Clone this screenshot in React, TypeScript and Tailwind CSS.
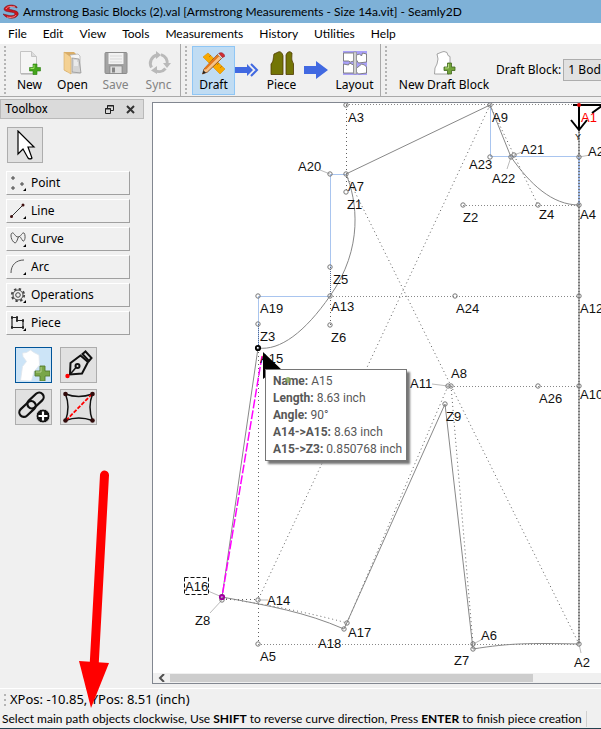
import React, { useState } from 'react';

const menus = ['File', 'Edit', 'View', 'Tools', 'Measurements', 'History', 'Utilities', 'Help'];

type Point = { name: string; x: number; y: number; lx: number; ly: number };

// Pattern points: x / y is the node, lx / ly is the label baseline
const points: Point[] = [
    { name: 'A3', x: 346, y: 105, lx: 348, ly: 122 },
    { name: 'A20', x: 330, y: 174, lx: 298, ly: 171 },
    { name: 'A7', x: 346, y: 174, lx: 348, ly: 191 },
    { name: 'Z1', x: 346, y: 192, lx: 347, ly: 209 },
    { name: 'A9', x: 490, y: 105, lx: 492, ly: 122 },
    { name: 'A21', x: 514, y: 155, lx: 521, ly: 154 },
    { name: 'A23', x: 490, y: 157, lx: 469, ly: 169 },
    { name: 'A22', x: 511, y: 157, lx: 492, ly: 183 },
    { name: 'A25', x: 579, y: 157, lx: 588, ly: 156 },
    { name: 'Z2', x: 463, y: 205, lx: 463, ly: 222 },
    { name: 'Z4', x: 538, y: 205, lx: 539, ly: 219 },
    { name: 'A4', x: 579, y: 205, lx: 580, ly: 219 },
    { name: 'Z5', x: 330, y: 267, lx: 333, ly: 284 },
    { name: 'A19', x: 258, y: 296, lx: 260, ly: 313 },
    { name: 'A13', x: 330, y: 296, lx: 331, ly: 311 },
    { name: 'A24', x: 455, y: 296, lx: 456, ly: 313 },
    { name: 'A12', x: 579, y: 296, lx: 580, ly: 313 },
    { name: 'Z3', x: 258, y: 324, lx: 260, ly: 341 },
    { name: 'Z6', x: 330, y: 325, lx: 331, ly: 342 },
    { name: 'A15', x: 258, y: 348, lx: 260, ly: 363 },
    { name: 'A8', x: 451, y: 386, lx: 451, ly: 378 },
    { name: 'A11', x: 448, y: 386, lx: 410, ly: 388 },
    { name: 'A26', x: 538, y: 386, lx: 539, ly: 403 },
    { name: 'A10', x: 579, y: 386, lx: 580, ly: 399 },
    { name: 'Z9', x: 445, y: 404, lx: 446, ly: 421 },
    { name: 'A16', x: 222, y: 597, lx: 185, ly: 591 },
    { name: 'Z8', x: 222, y: 600, lx: 195, ly: 625 },
    { name: 'A14', x: 258, y: 600, lx: 267, ly: 605 },
    { name: 'A17', x: 347, y: 623, lx: 348, ly: 637 },
    { name: 'A18', x: 344, y: 629, lx: 318, ly: 648 },
    { name: 'A5', x: 258, y: 644, lx: 260, ly: 661 },
    { name: 'A6', x: 473, y: 644, lx: 481, ly: 640 },
    { name: 'Z7', x: 473, y: 649, lx: 454, ly: 665 },
    { name: 'A2', x: 579, y: 644, lx: 574, ly: 667 },
];

const tooltipRows = [
    ['Name:', 'A15'],
    ['Length:', '8.63 inch'],
    ['Angle:', '90°'],
    ['A14->A15:', '8.63 inch'],
    ['A15->Z3:', '0.850768 inch'],
];

function Handle({ short = false }: { short?: boolean }) {
    return (
        <span className={`w-1 shrink-0 flex flex-col justify-between ${short ? 'h-3' : 'h-12'}`}>
            {Array.from({ length: short ? 3 : 12 }).map((_, i) => (
                <span key={i} className="size-0.5 bg-[#b4b4b4]" />
            ))}
        </span>
    );
}

function NewIcon() {
    return (
        <svg width="24" height="24" viewBox="0 0 24 24">
            <path d="M2.500.500h11l5 5v17h-16z" fill="#f5f5f5" stroke="#c4c4c4" />
            <path d="M13.500.500v5h5" fill="#dcdcdc" stroke="#c4c4c4" />
            <path d="M3 23h15" stroke="#aaa" />
            <path d="M15 13h4v3.500h3.500v3.500H19v3.500h-4V20h-3.500v-3.500H15z" fill="#45a51c" stroke="#2c7f13" strokeWidth=".6" />
            <path d="M16 14v3.500h-3.500" fill="none" stroke="#9be05e" />
        </svg>
    );
}

function OpenIcon() {
    return (
        <svg width="24" height="24" viewBox="0 0 24 24">
            <path d="M3 1h10l2 2v18H6L3 19z" fill="#d9ad68" />
            <path d="M9 4l8-1 2 2v17H9z" fill="#f6f6f6" stroke="#aaa" strokeWidth=".7" />
            <path d="M11 7l7 1 2 14-9-1z" fill="#d5d5d5" stroke="#8c8c8c" strokeWidth=".7" />
            <path d="M13 10h3M13 12h4M13 14h4" stroke="#fff" />
            <path d="M3 1l7 5v17l-7-4z" fill="#f4d193" stroke="#d5ab66" strokeWidth=".6" />
        </svg>
    );
}

function SaveIcon() {
    return (
        <svg width="24" height="24" viewBox="0 0 24 24">
            <rect x="1" y="1.500" width="22" height="21" rx="1" fill="#a3a3a3" stroke="#8c8c8c" />
            <rect x="4.500" y="2" width="15" height="11" fill="#f2f2f2" />
            <path d="M6 5h12M6 8h12M6 11h12" stroke="#d9d9d9" />
            <rect x="6" y="15" width="12" height="7.500" fill="#dedede" stroke="#777" strokeWidth=".6" />
            <rect x="8" y="16.500" width="3" height="5" fill="#858585" />
        </svg>
    );
}

function SyncIcon() {
    return (
        <svg width="24" height="24" viewBox="0 0 24 24" fill="none" stroke="#b9b9b9" strokeWidth="3">
            <path d="M4.500 16.500A8.500 8.500 0 0 1 10 4" />
            <path d="M14 3.600A8.500 8.500 0 0 1 20 14" />
            <path d="M18.500 17.500A8.500 8.500 0 0 1 8 19.500" />
            <path d="M9 0l5 4-5 4zM16 12h8l-4 5zM10 15v8l-6-3.500z" fill="#b9b9b9" stroke="none" />
        </svg>
    );
}

function DraftIcon() {
    return (
        <svg width="26" height="24" viewBox="0 0 26 24">
            <path d="M2 6l5-4 17 16-5 5z" fill="#f8a900" stroke="#d98b00" strokeWidth=".6" />
            <path d="M8 6l2-2M11 9l2-2M16 14l2-2M19 17l2-2" stroke="#b77500" strokeWidth=".8" />
            <path d="M1.500 23l1.500-5L17 3l4 4L6.500 21z" fill="#f6c28a" stroke="#7a3b10" strokeWidth=".8" />
            <path d="M4 18L18 4" stroke="#e4761c" strokeWidth="2" />
            <path d="M1.500 23l1-3.500 2.500 2.300z" fill="#222" />
            <path d="M16.500 3.500l4 4 1.500-1.500-4-4z" fill="#ddd" stroke="#777" strokeWidth=".5" />
            <path d="M18 2.500c1.500-2 6 0 5.500 3L21.500 6.500z" fill="#d42c35" stroke="#8d141c" strokeWidth=".6" />
        </svg>
    );
}

function PieceIcon() {
    return (
        <svg width="24" height="24" viewBox="0 0 24 24" fill="#737506" stroke="#4e3a00" strokeWidth=".8">
            <path d="M1 23.500V13C4 10 3 6 4 3L9 .700c2 0 3 1 4 4v18.800z" />
            <path d="M16 23.500V4c1-3 3-3.300 4-3.300l2 1.300c0 4-1 7 1.500 10.500v11z" />
        </svg>
    );
}

function LayoutIcon() {
    return (
        <svg width="24" height="24" viewBox="0 0 24 24">
            <rect width="24" height="24" fill="#a9a0f8" />
            <g fill="#fff" stroke="#777" strokeWidth=".9">
                <path d="M.500 2h10v8l-3 1-2-1H.500zM.500 13l5 1 1-2 4 2v8h-10z" />
                <path d="M13.500 4l3-1 2 2 1-3 4 1v8l-8 1-2-3zM13.500 17l3-2 2-2 3 1 2 2v6l-8 1-2-2z" />
            </g>
            <path d="M10.500 1h3v22h-3z" fill="#d0d0d0" stroke="#888" strokeWidth=".6" />
        </svg>
    );
}

function BlockIcon() {
    return (
        <svg width="24" height="24" viewBox="0 0 24 24">
            <path d="M5 3l5-2 2-.500 3 1 1 3 2 1v8l-1 9.500H2.500L3 17l2-4 1-5z" fill="#fff" stroke="#8f8f8f" strokeWidth=".8" />
            <path d="M15.500 12h4v4H23v3.500h-3.500V23h-4v-3.500H12V16h3.500z" fill="#73a43b" stroke="#41671e" strokeWidth=".8" />
            <path d="M16.500 13v4H13" fill="none" stroke="#b5d882" />
        </svg>
    );
}

function ToolButton({ label, icon, width, disabled, active }: {
    label: string; icon: React.ReactNode; width: string; disabled?: boolean; active?: boolean;
}) {
    return (
        <button
            disabled={disabled}
            className={`${width} h-[49px] shrink-0 flex flex-col items-center justify-between pt-1 text-xs leading-[18px] whitespace-nowrap border ${active ? 'bg-[#c0dcf3] border-[#8fc6f5]' : 'border-transparent'} ${disabled ? 'text-[#838383]' : ''}`}
        >
            {icon}
            <span>{label}</span>
        </button>
    );
}

const categories = [
    {
        name: 'Point',
        icon: <path d="M3 1v4M1 3h4M3 11v4M1 13h4M12 7v4M10 9h4" stroke="#444" />,
    },
    {
        name: 'Line',
        icon: <><path d="M1.500 13.500L13 2" stroke="#333" /><circle cx="1.500" cy="13.500" r="1.500" fill="#401010" /><circle cx="13" cy="2" r="1.500" fill="#401010" /></>,
    },
    {
        name: 'Curve',
        icon: <path d="M5 12C1 10 0 3 2 2c2-1 3 4 6 4s4-5 6-4c2 2 1 9-1 8C11 8 10 3 8 7c-1 3-2 5-3 5z" stroke="#555" fill="none" />,
    },
    {
        name: 'Arc',
        icon: <path d="M1 14C1 6 6 1 14 1" stroke="#555" fill="none" />,
    },
    {
        name: 'Operations',
        icon: <g stroke="#444" fill="none"><circle cx="8" cy="8" r="5" /><circle cx="8" cy="8" r="2.300" /><circle cx="8" cy="8" r="6.200" strokeWidth="1.800" strokeDasharray="2.400 2.470" /></g>,
    },
    {
        name: 'Piece',
        icon: <g stroke="#222" fill="none"><path d="M2 2.500h5v3h6v7H2z" strokeWidth="1.200" /><path d="M1 2.500h2M6 2.500h2M6 5.500h2M12 5.500h2M12 12.500h2M1 12.500h2" strokeWidth="2.500" /></g>,
    },
];

function Toolbox() {
    const [tool, setTool] = useState('piece');

    const tools = [
        {
            id: 'piece',
            title: 'New pattern piece',
            icon: (
                <svg width="32" height="32" viewBox="0 0 32 32">
                    <path d="M4.500 4l4-.500 4-2.500 3.500 2.500 5 2.500.500 10-5.500 6.500-2.500 9.500-11-.500 2-14 4-5-3.500-5z" fill="#fff" stroke="#dfe6ec" strokeWidth=".8" />
                    <path d="M22 17h5v5h5v5h-5v5h-5v-5h-5v-5h5z" fill="#79a648" stroke="#557a2c" strokeWidth=".9" />
                    <path d="M23 18v5h-5" fill="none" stroke="#b5d28f" />
                </svg>
            ),
        },
        {
            id: 'path',
            title: 'Internal path',
            icon: (
                <svg width="32" height="32" viewBox="0 0 32 32" fill="none" stroke="#111" strokeWidth="2">
                    <path d="M7 25.500L7.500 14l10-7.500 7.500 6.500-6 11.500z" />
                    <path d="M19.500 5l3-2.500L28.500 9 26 12z" />
                    <path d="M7 25.500l6-7" strokeWidth="1.500" />
                    <circle cx="14.500" cy="17" r="2" />
                    <circle cx="4.500" cy="27" r="2.200" fill="#f00" stroke="none" />
                </svg>
            ),
        },
        {
            id: 'anchor',
            title: 'Anchor point',
            icon: (
                <svg width="32" height="32" viewBox="0 0 32 32" fill="none" stroke="#111" strokeWidth="2.200">
                    <rect x="8" y="5" width="19" height="9" rx="4.500" transform="rotate(-43 17.500 9.500)" />
                    <rect x="0" y="13.500" width="19" height="9" rx="4.500" transform="rotate(-43 9.500 18)" />
                    <circle cx="25" cy="25" r="7" fill="#111" stroke="#e1e1e1" strokeWidth="1" />
                    <path d="M25 20.500v9M20.500 25h9" stroke="#fff" />
                </svg>
            ),
        },
        {
            id: 'internal',
            title: 'Insert nodes',
            icon: (
                <svg width="32" height="32" viewBox="0 0 32 32" fill="none" stroke="#111" strokeWidth="1.500">
                    <path d="M2.500 3q13 5 27 0q-5 13 0 26.500q-14-5-27 0q5-13.500 0-26.500" />
                    <path d="M3 29.500L29 3" stroke="#f00" strokeWidth="1.800" strokeDasharray="4 1.500" />
                    <g fill="#310b0b" stroke="none">
                        <circle cx="2.500" cy="3" r="2.300" /><circle cx="29.500" cy="3" r="2.300" /><circle cx="2.500" cy="29.500" r="2.300" /><circle cx="29.500" cy="29.500" r="2.300" />
                    </g>
                </svg>
            ),
        },
    ];

    return (
        <aside className="w-36 shrink-0">
            <header className="h-5 px-1 flex items-center gap-3 bg-[#dadada] border border-[#b9b9b9] text-xs font-['Roboto',sans-serif]">
                <h2 className="flex-1">Toolbox</h2>
                <button aria-label="Float">
                    <svg width="9" height="9" viewBox="0 0 9 9" fill="none" stroke="#222"><path d="M2.500 3V.500h6v5H6M2 1h7M.500 3.500h5v5h-5zM0 4h6" /></svg>
                </button>
                <button aria-label="Close" className="mr-1">
                    <svg width="9" height="9" viewBox="0 0 9 9" stroke="#333" strokeWidth="2"><path d="M1 1l7 7M8 1L1 8" /></svg>
                </button>
            </header>

            <button aria-label="Select" className="mt-2 ml-[7px] size-9 flex items-center justify-center bg-[#e1e1e1] border border-[#adadad]">
                <svg width="22" height="30" viewBox="0 0 22 30"><path d="M4 1v23l5-5 5 9q2 2 4 0l-4-11h6z" fill="#fff" stroke="#000" strokeWidth="1.200" /></svg>
            </button>

            <div className="mt-2 mx-1.5 pr-2 flex flex-col gap-1">
                {categories.map(c => (
                    <button key={c.name} className="h-6 pl-[3px] flex items-center gap-1 text-xs border border-t-white border-l-white border-r-[#a0a0a0] border-b-[#a0a0a0]">
                        <svg width="17" height="16" viewBox="0 0 17 16">
                            {c.icon}
                            <path d="M16 13v3h-3z" fill="#000" />
                        </svg>
                        {c.name}
                    </button>
                ))}
            </div>

            <div className="mt-3 ml-[15px] grid grid-cols-[37px_37px] gap-x-2 gap-y-1.5">
                {tools.map(t => (
                    <button
                        key={t.id}
                        aria-label={t.title}
                        onClick={() => setTool(t.id)}
                        className={`h-9 flex items-center justify-center border ${tool === t.id ? 'bg-[#cce4f7] border-[#005499]' : 'bg-[#e1e1e1] border-[#adadad]'}`}
                    >
                        {t.icon}
                    </button>
                ))}
            </div>
        </aside>
    );
}

function Drawing() {
    return (
        <svg className="block w-full h-[570px]">
            <g transform="translate(-153 -103)" fill="none">
                {/* Construction lines */}
                <g stroke="#606060" strokeDasharray="1 3">
                    <path d="M346.500 105v87M258.500 348v296M330.500 296v29M490 105L258 600M346 174L579 644M490 105l48 100" />
                    <path d="M448 386L347 623M451 386l22 258M222 599.500h36M222 598q70 10 125 25" />
                </g>
                <g stroke="#888" strokeDasharray="1 2">
                    <path d="M346 104.500h260M463 205.500h116M330 296.500h249M451 386.500h128M258 644.500h321" />
                </g>

                <path d="M330.500 267v-93M330 174.500h16M258.500 296v52M258 296.500h72M490.500 105v52M490 156.500h89" stroke="#a9c5ef" />
                <path d="M258.500 324v24M330.500 267v29" stroke="#536b96" strokeDasharray="1 1" />
                <path d="M579 105v539" stroke="#b4b4b4" strokeWidth="2" />
                <path d="M579 105v539" stroke="#777" strokeWidth="2" strokeDasharray="1 2" />
                <path d="M579 157v48" stroke="#9fb9e6" strokeWidth="2" strokeDasharray="2 1" />

                {/* Pattern outline */}
                <g stroke="#888">
                    <path d="M346 174L490 105L511 157C530 184 552 205 579 205" />
                    <path d="M346 174C357 200 364 248 330 296C305 332 280 351 258 348L222 597" />
                    <path d="M222 597C270 606 305 612 344 629L445 404L473 649C510 643 530 643 579 644" />
                </g>

                {/* Label leaders */}
                <path d="M320 170l10 4M514 155l8-3M511 157l-4 12M579 157l11-2M432 384l16 2M208 591l14 6M210 613l12-13M258 600h10M473 644l8-4M579 644l2 9" stroke="#bbb" />

                <g stroke="#777">
                    {points.map(p => (
                        <circle key={p.name} cx={p.x} cy={p.y} r="2.200" />
                    ))}
                </g>

                {/* Axis marker */}
                <path d="M573 105h40M579 105v24M571 120l8 10 8-10M592 113l14-10" stroke="#000" strokeWidth="2" />
                <circle cx="579" cy="105" r="2" fill="#d00" />

                {/* Current path selection */}
                <path d="M262 356L222 597" stroke="#f0f" strokeWidth="1.500" strokeDasharray="9 2" />
                <circle cx="222" cy="597" r="2.200" stroke="#909" strokeWidth="1.800" />
                <circle cx="258" cy="348" r="2.200" stroke="#000" strokeWidth="1.800" />
                <rect x="184.500" y="577.500" width="24" height="17" stroke="#111" strokeDasharray="4 2" />

                <g className="text-[13px]" fill="#111" fontFamily="Liberation Sans, sans-serif">
                    {points.map(p => (
                        <text key={p.name} x={p.lx} y={p.ly}>{p.name}</text>
                    ))}
                    <text x="581" y="122" fill="#f00">A1</text>
                    <text x="575" y="140" className="text-[9px]">Y</text>
                </g>

                <path d="M263 352l20 19-11 1-9 7z" fill="#000" />
            </g>
        </svg>
    );
}

function Canvas() {
    return (
        <main className="relative mt-[3px] flex-1 min-w-0 flex flex-col bg-white border border-r-0 border-[#828790]">
            <Drawing />

            <div className="absolute left-28 top-[266px] pl-[7px] pr-1 pt-[3px] pb-0.5 bg-white border border-[#767676] shadow-[3px_3px_2px_#777] text-xs leading-[17px] text-[#575757] whitespace-nowrap font-['Roboto',sans-serif]">
                {tooltipRows.map(([k, v]) => (
                    <p key={k}><b>{k}</b> {v}</p>
                ))}
                <svg width="12" height="14" viewBox="0 0 12 14" className="absolute left-4 top-0">
                    <path d="M6 7v6M3 10h6" stroke="#8aaa5a" strokeWidth="3" opacity=".75" />
                </svg>
            </div>

            <div className="mt-auto h-2.5 flex items-center bg-[#f0f0f0] overflow-hidden">
                <button aria-label="Scroll left" className="w-[17px] flex justify-center">
                    <svg width="8" height="8" viewBox="0 0 8 8" fill="none" stroke="#505050" strokeWidth="2"><path d="M6 0L2 4l4 4" /></svg>
                </button>
                <span className="h-2 w-[81%] bg-[#cdcdcd]" />
            </div>
        </main>
    );
}

function App() {
    const [block, setBlock] = useState('1 Bodice');

    return (
        <div className="relative min-h-screen flex flex-col overflow-hidden bg-[#f0f0f0] text-black font-['Noto_Sans',sans-serif]">
            <header className="h-[23px] px-[3px] flex items-center gap-1 bg-[#7eb1d7] text-xs whitespace-nowrap font-['Lato',sans-serif]">
                <svg width="16" height="16" viewBox="0 0 16 16">
                    <path d="M14 3C10-.500 2 1 1 5c0 4 11 2 11 5 0 2-5 2-8 1l-4-1c3 5 12 6 15 1 2-6-10-4-9-7 1-2 4-2 8 0z" fill="#c9151e" stroke="#7e141a" strokeWidth=".6" />
                    <path d="M3 5c1-3 6-3 9-2M4 13c4 1 8 0 9-2" fill="none" stroke="#f78a8d" />
                </svg>
                <h1>Armstrong Basic Blocks (2).val [Armstrong Measurements - Size 14a.vit] - Seamly2D</h1>
            </header>

            <nav className="h-[21px] flex items-center bg-white text-xs font-['Lato',sans-serif]">
                {menus.map(m => (
                    <button key={m} className="px-2">{m}</button>
                ))}
            </nav>

            <div className="h-[53px] shrink-0 flex items-center overflow-hidden border-b border-[#a9a9a9]">
                <div className="h-full pl-1 flex items-center shrink-0 border-r border-[#a9a9a9]">
                    <Handle />
                    <ToolButton label="New" width="w-[43px]" icon={<NewIcon />} />
                    <ToolButton label="Open" width="w-[43px]" icon={<OpenIcon />} />
                    <ToolButton label="Save" width="w-[43px]" icon={<SaveIcon />} disabled />
                    <ToolButton label="Sync" width="w-[43px]" icon={<SyncIcon />} disabled />
                </div>
                <div className="h-full pl-1 flex items-center shrink-0 border-r border-[#a9a9a9]">
                    <Handle />
                    <span className="w-[3px]" />
                    <ToolButton label="Draft" width="w-[43px]" icon={<DraftIcon />} active />
                    <svg width="25" height="14" viewBox="0 0 25 14"><path d="M0 4h12V1l6 6-6 6v-3H0z" fill="#4169e1" /><path d="M16 1l6 6-6 6" fill="none" stroke="#4169e1" strokeWidth="2" /></svg>
                    <ToolButton label="Piece" width="w-[43px]" icon={<PieceIcon />} />
                    <svg width="26" height="18" viewBox="0 0 26 18"><path d="M1 5h12V0l12 9-12 9v-5H1z" fill="#4169e1" /></svg>
                    <ToolButton label="Layout" width="w-[51px]" icon={<LayoutIcon />} />
                </div>
                <div className="h-full pl-1 flex items-center shrink-0">
                    <Handle />
                    <span className="w-[3px]" />
                    <ToolButton label="New Draft Block" width="w-[104px]" icon={<BlockIcon />} />
                    <label htmlFor="block" className="pr-0.5 text-xs whitespace-nowrap">Draft Block:</label>
                    <select
                        id="block"
                        value={block}
                        onChange={e => setBlock(e.target.value)}
                        className="h-[22px] w-36 pl-1 appearance-none text-xs leading-5 bg-[#e1e1e1] border border-[#adadad]"
                    >
                        <option>1 Bodice</option>
                        <option>2 Skirt</option>
                    </select>
                </div>
            </div>

            <div className="flex-1 pt-0.5 flex gap-2">
                <Toolbox />
                <Canvas />
            </div>

            <div className="mt-1 h-[22px] pl-1 flex items-center gap-0.5 border-t border-white text-[13px]">
                <Handle short />
                <span>XPos: -10.85, YPos: 8.51 (inch)</span>
            </div>
            <footer className="h-[19px] pl-0.5 flex items-center text-xs whitespace-nowrap border-b border-[#23424f] font-['Lato',sans-serif]">
                <p className="pr-1 border-r border-[#d0d0d0]">
                    Select main path objects clockwise, Use <b>SHIFT</b> to reverse curve direction, Press <b>ENTER</b> to finish piece creation
                </p>
            </footer>

            {/* Annotation pointing at the status bar hint */}
            <svg width="32" height="240" viewBox="78 470 32 240" className="absolute left-[78px] top-[470px] pointer-events-none">
                <path d="M104.500 475L94 668" stroke="#f00" strokeWidth="9" strokeLinecap="round" />
                <path d="M79 661l30 2-18 45z" fill="#f00" />
            </svg>
        </div>
    );
}

export default App;
